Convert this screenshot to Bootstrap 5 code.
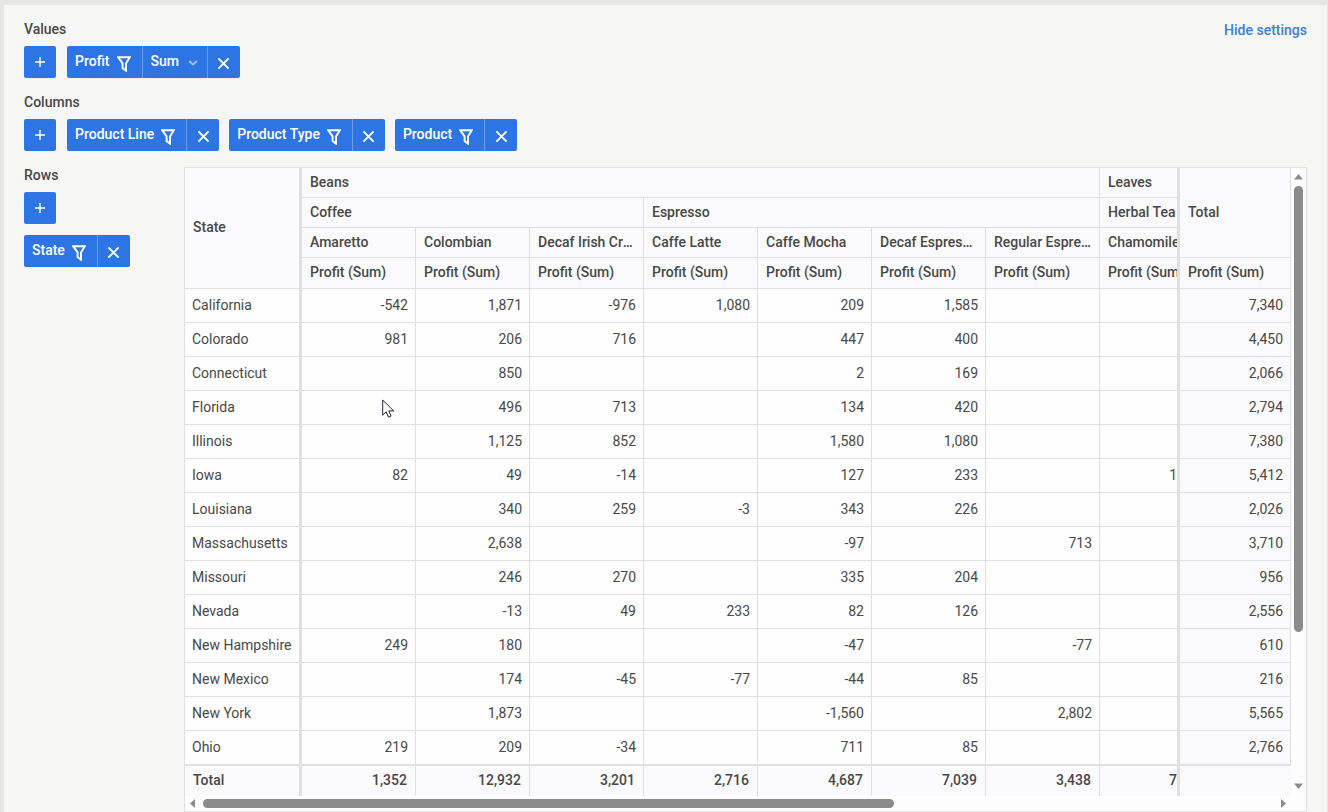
<!DOCTYPE html>
<html lang="en">
<head>
<meta charset="utf-8">
<meta name="viewport" content="width=device-width, initial-scale=1">
<title>Pivot table</title>
<link href="https://cdn.jsdelivr.net/npm/bootstrap@5.3.0/dist/css/bootstrap.min.css" rel="stylesheet">
<style>
:root { --line: #e0e0e2; --blue: #2d75e4; --head: #fafafc; --ink: #484848; }
body { font-family: Roboto, "Liberation Sans", sans-serif; font-size: 14px; line-height: 20px; color: var(--ink); background: #f6f6f5; }
.app-shell { border: solid #e6e6e5; border-width: 5px 1px 0 4px; padding: 14px 20px 0 20px; }
.section-title { font-size: 14px; line-height: 20px; font-weight: 500; margin: 0 0 7px; }
.hide-link { color: #3a7fdc; font-weight: 500; line-height: 22px; }
.zone { gap: 10px; margin-bottom: 14px; }
.add-btn { width: 32px; height: 32px; background: var(--blue); color: #fff; border: 0; border-radius: 2px; padding: 0; margin-right: 1px; }
.chip { height: 32px; background: var(--blue); color: #fff; font-weight: 500; border-radius: 2px; overflow: hidden; }
.chip button, .chip select { border: 0; background: transparent; color: #fff; font-weight: 500; }
.chip-field { padding: 0 11px 0 8px; gap: 7px; }
.chip .chip-remove { width: 33px; padding: 2px 0 0; border-left: 1px solid #6a9eee; }
.chip .chip-agg { appearance: none; width: 65px; padding: 0 0 2px 8px; border-left: 1px solid #6a9eee; background: url("data:image/svg+xml,%3Csvg xmlns='http://www.w3.org/2000/svg' width='10' height='6' viewBox='0 0 10 6'%3E%3Cpath d='M1.2 1l3.8 3.6L8.8 1' fill='none' stroke='%23a9c8f6' stroke-width='1.8'/%3E%3C/svg%3E") no-repeat right 9px top 14px; }
.chip-name { padding-bottom: 2px; }
.rows-side { width: 160px; }
.rows-list { gap: 11px; }
.pivot { border: 1px solid var(--line); margin-top: 2px; background: #fdfdfe; min-width: 0; }
.grid { table-layout: fixed; width: 100%; border-collapse: separate; border-spacing: 0; }
.grid th, .grid td { border: solid var(--line); border-width: 0 1px 1px 0; overflow: hidden; white-space: nowrap; }
.grid thead th { background: var(--head); font-weight: 500; height: 30px; padding: 0 8px 1px; text-overflow: ellipsis; }
.grid thead tr:last-child th { height: 31px; padding-bottom: 2px; }
.grid thead .corner { padding-bottom: 3px; }
.grid tbody td, .grid tbody th { height: 34px; padding: 0 7px 1px; background: #fefefe; font-weight: 400; }
.grid tbody td, .grid tfoot td { text-align: right; }
.grid tbody tr:last-child > * { border-bottom-width: 2px; height: 35px; }
.grid tfoot td, .grid tfoot th { background: var(--head); font-weight: 500; height: 30px; padding: 0 8px 2px; border-bottom: 0; }
.grid .pin { border-right-width: 3px; }
.grid .cut { padding-right: 0; text-overflow: clip; }
.grid tbody .sum { background: var(--head); }
.grid tfoot .sum { border-right: 0; }
.col-state { width: 117px; }
.col-cut { width: 80px; }
.col-sum { width: 111px; }
.vbar { width: 15px; padding: 6px 0 7px; }
.hbar { height: 15px; padding: 0 20px 0 5px; }
.thumb { background: #8b8b8b; border-radius: 5px; }
.vbar .thumb { width: 9px; height: 100%; }
.hbar .thumb { height: 9px; }
.vtrack { margin: 6px 0; }
.htrack { margin: 0 8px; }
.pointer { position: absolute; left: 197px; top: 231px; }
</style>
<script src="https://cdn.jsdelivr.net/npm/bootstrap@5.3.0/dist/js/bootstrap.bundle.min.js"></script>
</head>
<body>
<svg class="d-none" aria-hidden="true">
  <symbol id="i-filter" viewBox="0 0 14 16"><path d="M1.2 1.2h11.6L9 7.4v7.3L5.6 12V7.4z" fill="none" stroke="currentColor" stroke-width="1.9"/></symbol>
  <symbol id="i-x" viewBox="0 0 14 14"><path d="M1.5 1.5l11 11M12.5 1.5l-11 11" fill="none" stroke="currentColor" stroke-width="2"/></symbol>
  <symbol id="i-plus" viewBox="0 0 10 10"><path d="M5 0v10M0 5h10" fill="none" stroke="currentColor" stroke-width="1.4"/></symbol>
</svg>
<main class="app-shell">
  <div class="d-flex justify-content-between">
    <div>
      <h2 class="section-title">Values</h2>
      <div class="zone d-flex" id="values"></div>
    </div>
    <a href="#" class="hide-link text-decoration-none align-self-start">Hide settings</a>
  </div>
  <h2 class="section-title">Columns</h2>
  <div class="zone d-flex" id="columns"></div>
  <div class="d-flex align-items-start">
    <aside class="rows-side flex-shrink-0">
      <h2 class="section-title">Rows</h2>
      <div class="rows-list d-flex flex-column align-items-start" id="rows"></div>
    </aside>
    <section class="pivot flex-grow-1 position-relative">
      <div class="d-flex">
        <div class="flex-grow-1 overflow-hidden">
          <table class="grid">
            <colgroup><col class="col-state"><col span="7"><col class="col-cut"><col class="col-sum"></colgroup>
            <thead>
              <tr><th rowspan="4" class="pin corner" scope="col">State</th><th colspan="7">Beans</th><th class="pin cut">Leaves</th><th rowspan="3">Total</th></tr>
              <tr><th colspan="3">Coffee</th><th colspan="4">Espresso</th><th class="pin cut">Herbal Tea</th></tr>
              <tr><th>Amaretto</th><th>Colombian</th><th>Decaf Irish Cream</th><th>Caffe Latte</th><th>Caffe Mocha</th><th>Decaf Espresso</th><th>Regular Espresso</th><th class="pin cut">Chamomile</th></tr>
              <tr id="measures"></tr>
            </thead>
            <tbody id="body"></tbody>
            <tfoot><tr><th class="pin" scope="row">Total</th><td>1,352</td><td>12,932</td><td>3,201</td><td>2,716</td><td>4,687</td><td>7,039</td><td>3,438</td><td class="pin cut">7</td><td class="sum"></td></tr></tfoot>
          </table>
        </div>
        <div class="vbar flex-shrink-0 d-flex flex-column align-items-center">
          <svg width="9" height="6" viewBox="0 0 9 6"><path d="M4.500 0L9 5.500H0z" fill="#8b8b8b"/></svg>
          <div class="vtrack flex-grow-1"><div class="thumb" style="height:75.500%"></div></div>
          <svg width="9" height="6" viewBox="0 0 9 6"><path d="M0 .5h9L4.500 6z" fill="#8b8b8b"/></svg>
        </div>
      </div>
      <div class="hbar d-flex align-items-center">
        <svg width="5" height="9" viewBox="0 0 5 9"><path d="M5 0v9L0 4.500z" fill="#8b8b8b"/></svg>
        <div class="htrack flex-grow-1"><div class="thumb" style="width:64.600%"></div></div>
        <svg width="5" height="9" viewBox="0 0 5 9"><path d="M0 0v9l5-4.500z" fill="#8b8b8b"/></svg>
      </div>
      <svg class="pointer" width="13" height="20" viewBox="0 0 13 20" aria-hidden="true"><path d="M.7 1v15.200l3.500-3.300 2.300 5.300 2.600-1.100-2.300-5.200h4.900z" fill="#fff" stroke="#223" stroke-width="1"/></svg>
    </section>
  </div>
</main>
<script>
const add = what => `<button type="button" class="add-btn d-flex align-items-center justify-content-center" aria-label="Add ${what}"><svg width="10" height="10"><use href="#i-plus"/></svg></button>`;
const chip = (name, agg) => `<div class="chip d-flex">
  <button type="button" class="chip-field d-flex align-items-center"><span class="chip-name">${name}</span><svg class="mt-1" width="14" height="16"><use href="#i-filter"/></svg></button>
  ${agg ? `<select class="chip-agg" aria-label="Operation"><option>${agg}</option></select>` : ''}
  <button type="button" class="chip-remove d-flex align-items-center justify-content-center" aria-label="Remove ${name}"><svg width="13" height="13"><use href="#i-x"/></svg></button>
</div>`;
document.getElementById('values').innerHTML = add('value') + chip('Profit', 'Sum');
document.getElementById('columns').innerHTML = add('column') + ['Product Line', 'Product Type', 'Product'].map(n => chip(n)).join('');
document.getElementById('rows').innerHTML = add('row') + chip('State');

const data = [
  ['California', '-542', '1,871', '-976', '1,080', '209', '1,585', '', '', '7,340'],
  ['Colorado', '981', '206', '716', '', '447', '400', '', '', '4,450'],
  ['Connecticut', '', '850', '', '', '2', '169', '', '', '2,066'],
  ['Florida', '', '496', '713', '', '134', '420', '', '', '2,794'],
  ['Illinois', '', '1,125', '852', '', '1,580', '1,080', '', '', '7,380'],
  ['Iowa', '82', '49', '-14', '', '127', '233', '', '1', '5,412'],
  ['Louisiana', '', '340', '259', '-3', '343', '226', '', '', '2,026'],
  ['Massachusetts', '', '2,638', '', '', '-97', '', '713', '', '3,710'],
  ['Missouri', '', '246', '270', '', '335', '204', '', '', '956'],
  ['Nevada', '', '-13', '49', '233', '82', '126', '', '', '2,556'],
  ['New Hampshire', '249', '180', '', '', '-47', '', '-77', '', '610'],
  ['New Mexico', '', '174', '-45', '-77', '-44', '85', '', '', '216'],
  ['New York', '', '1,873', '', '', '-1,560', '', '2,802', '', '5,565'],
  ['Ohio', '219', '209', '-34', '', '711', '85', '', '', '2,766']
];
const kind = i => i === 8 ? 'pin cut' : i === 9 ? 'sum' : '';
document.getElementById('measures').innerHTML = Array.from({ length: 9 }, (_, i) => `<th class="${kind(i + 1)}">Profit (Sum)</th>`).join('');
document.getElementById('body').innerHTML = data.map(r => '<tr>' + r.map((v, i) => i ? `<td class="${kind(i)}">${v}</td>` : `<th scope="row" class="pin">${v}</th>`).join('') + '</tr>').join('');
</script>
</body>
</html>
